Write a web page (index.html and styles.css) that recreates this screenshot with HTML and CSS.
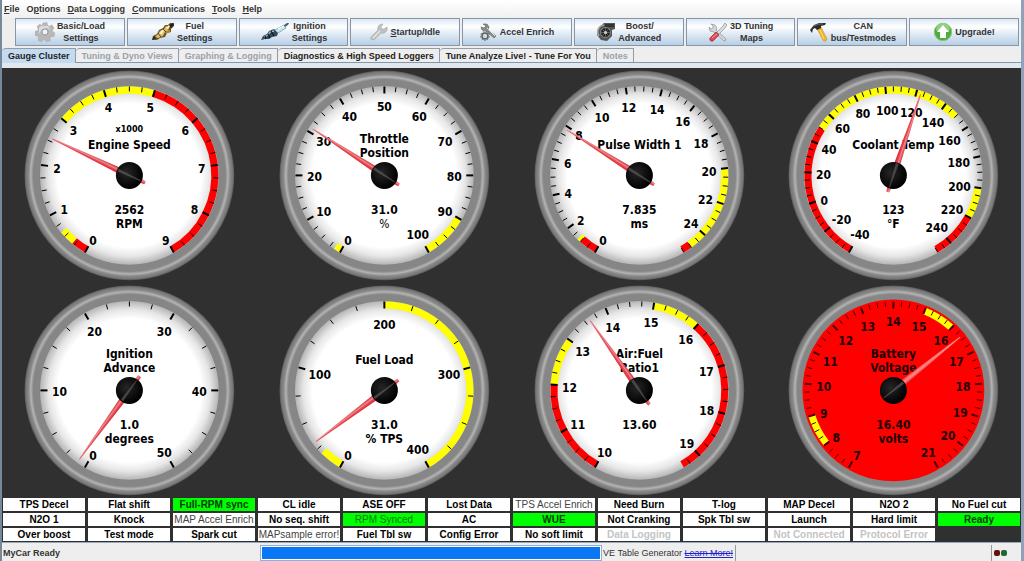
FILE: index.html
```html
<!DOCTYPE html>
<html lang="en">
<head>
<meta charset="utf-8">
<title>Gauge Cluster</title>
<link rel="stylesheet" href="styles.css">
</head>
<body>
<div class="app">
  <nav class="menu" aria-label="Main menu">
    <button type="button"><u>F</u>ile</button>
    <button type="button">O<u>p</u>tions</button>
    <button type="button"><u>D</u>ata Logging</button>
    <button type="button"><u>C</u>ommunications</button>
    <button type="button"><u>T</u>ools</button>
    <button type="button"><u>H</u>elp</button>
  </nav>

  <div class="toolbar" role="toolbar" aria-label="Settings">
    <button type="button" class="tool">
      <svg class="icon" viewBox="0 0 20 20" aria-hidden="true">
        <path d="M8 1l4-.4.7 2.8 1.700.8 2.500-1.300 2.300 3-1.800 2.100.4 1.900 2 1-.8 3.600-2.900 0-1.200 1.500.4 2.700-3.400 1.300-1.700-2.200-1.900 0-1.900 2-3.300-1.600.6-2.700-1.100-1.600-2.600-.5 0-3.800 2.600-.9.7-1.700-1.300-2.400L4.600 2.200l2.400 1.300z" fill="#b8b8b8" stroke="#a2a2a2" stroke-width=".5"/>
        <path d="M4 6l2-2 7 0 3 4-4-2-5 1-3 5z" fill="#dcdcdc"/>
        <circle cx="10" cy="10" r="3" fill="#eef2f6" stroke="#9a9a9a"/>
      </svg>
      <span>Basic/Load<br>Settings</span>
    </button>
    <button type="button" class="tool">
      <svg class="icon icon-fuel" viewBox="0 0 24 20" aria-hidden="true">
        <path d="M1 18l1-4 4-2 2-4 4-2 2-3 3 0 2-2 4 0 0 3-3 3 0 3-4 1-2 4-5 1-3 2z" fill="#6b5428"/>
        <path d="M4 15l3-3 2-3 4-2 2-3 3 1-1 4-3 1-2 4-5 2z" fill="#dfbd66"/>
        <path d="M8 12l3-4 2 0-2 4zM15 6l3-3 2 0-3 4z" fill="#fff3c4"/>
        <path d="M18 3l4-2 1 2-3 3zM1 18l2-4 2 2z" fill="#25201a"/>
        <path d="M14 9l5-1 0 2-4 2z" fill="#b58c34"/>
        <path d="M7 11l3 4M12 7l3 3" stroke="#4a3815" stroke-width=".9"/>
      </svg>
      <span>Fuel<br>Settings</span>
    </button>
    <button type="button" class="tool">
      <svg class="icon icon-plug" viewBox="0 0 30 20" aria-hidden="true">
        <path d="M1 18l2-4 4-2 2-3 5-2 4 4-1 3-5 1-3 2-4 0z" fill="#33495b"/>
        <path d="M4 15l4-2 2-3 4-1" fill="none" stroke="#a2b8c8" stroke-width="1.300"/>
        <path d="M11 9l3 5M8 12l2 4M5 14l1 3" stroke="#0e161e" stroke-width="1.200"/>
        <path d="M15 8l9-5 2 3-8 5z" fill="#c9e3ef" stroke="#6a94a8" stroke-width=".7"/>
        <path d="M18 7l6-3" stroke="#fff" stroke-width="1.200"/>
        <path d="M24 3l3-2 2 0-1 2-3 2z" fill="#4a6172"/>
      </svg>
      <span>Ignition<br>Settings</span>
    </button>
    <button type="button" class="tool">
      <svg class="icon icon-wrench" viewBox="0 0 18 18" aria-hidden="true">
        <path d="M1 14l7-7c-1-3 1-6 5-6l-2 3 1 2 2 0 3-2c1 4-2 7-6 6l-6 6c-3 2-5 0-4-2z" fill="#c0c0c0" stroke="#a4a4a4" stroke-width=".6"/>
        <path d="M3 15l7-7" stroke="#e8e8e8" stroke-width="1.200"/>
      </svg>
      <span><u>S</u>tartup/Idle</span>
    </button>
    <button type="button" class="tool">
      <svg class="icon icon-wrench" viewBox="0 0 18 18" aria-hidden="true">
        <path d="M3 1l4 0 2 3-1 3 8 6-2 2-8-7-4-1-1-3 3 1 2-2z" fill="#8b8e88" stroke="#5f625d" stroke-width=".6"/>
        <path d="M7 5l8 8" stroke="#e4e6e0"/>
        <circle cx="5" cy="13" r="3" fill="#d5d9dc" stroke="#5a6068" stroke-width="1.500"/>
        <circle cx="5" cy="13" r="4.400" fill="none" stroke="#5a6068" stroke-dasharray="1.500 1.500"/>
      </svg>
      <span>Accel Enrich</span>
    </button>
    <button type="button" class="tool">
      <svg class="icon" viewBox="0 0 20 20" aria-hidden="true">
        <path d="M8 1l11 0 0 6-3 1 0 6-5 5-6-1-4-5 1-7z" fill="#555"/>
        <path d="M9 2h9v3H9z" fill="#333"/>
        <path d="M3 14a7 7 0 0 1 5-11" fill="none" stroke="#aaa" stroke-width="1.500"/>
        <circle cx="9.500" cy="10.500" r="5" fill="#222" stroke="#8d8d8d"/>
        <path d="M9.500 6v9M5 10.500h9M6.500 7.500l6 6M12.500 7.500l-6 6" stroke="#777" stroke-width=".7"/>
        <circle cx="9.500" cy="10.500" r="1.600" fill="#ccc"/>
      </svg>
      <span>Boost/<br>Advanced</span>
    </button>
    <button type="button" class="tool">
      <svg class="icon" viewBox="0 0 20 20" aria-hidden="true">
        <path d="M3 2l4 1 2 3-1 2 9 8 1 2-2 1-10-9-4-1-1-4 2 2 2-1 0-2z" fill="#d6d6da" stroke="#8e8e96" stroke-width=".7"/>
        <path d="M17 1l2 2-2 3-6 6-2-2 6-6z" fill="#dcdce0" stroke="#8e8e96" stroke-width=".7"/>
        <path d="M8 10l3 3-6 6c-2 1-4-1-3-3z" fill="#dc4650" stroke="#a82730" stroke-width=".7"/>
        <path d="M4 16l5-4" stroke="#f6a2a6"/>
      </svg>
      <span>3D Tuning<br>Maps</span>
    </button>
    <button type="button" class="tool">
      <svg class="icon" viewBox="0 0 20 20" aria-hidden="true">
        <path d="M8 7l4-2 6 12c0 2-3 3-4 1z" fill="#f0b429" stroke="#c8921e" stroke-width=".6"/>
        <path d="M11 8l4 9" stroke="#ffdf80"/>
        <path d="M1 8l4-5 5-2 7 0-1 2-4 1 0 2-4 2-2-2-2 1-1 4z" fill="#2c2c2e"/>
        <path d="M5 4l5-2 4 0" fill="none" stroke="#7c7c80" stroke-width=".8"/>
      </svg>
      <span>CAN<br>bus/Testmodes</span>
    </button>
    <button type="button" class="tool">
      <svg class="icon" viewBox="0 0 20 20" aria-hidden="true">
        <circle cx="10" cy="10" r="8.700" fill="#4cae3c" stroke="#8dc486"/>
        <path d="M3 8a7 7 0 0 1 14 0c-4 3-10 3-14 0z" fill="#8ed07c"/>
        <path d="M10 3l6 7h-3v6H7v-6H4z" fill="#fff"/>
      </svg>
      <span>Upgrade!</span>
    </button>
  </div>

  <div class="tabs" role="tablist">
    <button type="button" class="tab selected" role="tab" aria-selected="true">Gauge Cluster</button>
    <button type="button" class="tab" role="tab" disabled>Tuning &amp; Dyno Views</button>
    <button type="button" class="tab" role="tab" disabled>Graphing &amp; Logging</button>
    <button type="button" class="tab" role="tab">Diagnostics &amp; High Speed Loggers</button>
    <button type="button" class="tab" role="tab">Tune Analyze Live! - Tune For You</button>
    <button type="button" class="tab" role="tab" disabled>Notes</button>
  </div>

  <main class="dash">
    <div class="gauges" id="gauges"></div>
    <div class="lamps">
      <div>TPS Decel</div><div>Flat shift</div><div class="on">Full-RPM sync</div><div>CL idle</div><div>ASE OFF</div><div>Lost Data</div><div class="thin">TPS Accel Enrich</div><div>Need Burn</div><div>T-log</div><div>MAP Decel</div><div>N2O 2</div><div>No Fuel cut</div>
      <div>N2O 1</div><div>Knock</div><div class="thin">MAP Accel Enrich</div><div>No seq. shift</div><div class="on thin">RPM Synced</div><div>AC</div><div class="on">WUE</div><div>Not Cranking</div><div>Spk Tbl sw</div><div>Launch</div><div>Hard limit</div><div class="on">Ready</div>
      <div>Over boost</div><div>Test mode</div><div>Spark cut</div><div class="thin">MAPsample error!</div><div>Fuel Tbl sw</div><div>Config Error</div><div>No soft limit</div><div class="off">Data Logging</div><div></div><div class="off">Not Connected</div><div class="off">Protocol Error</div>
    </div>
  </main>

  <footer class="status">
    <span class="ready">MyCar Ready</span>
    <span class="progress"><span class="fill"></span></span>
    <span class="promo">VE Table Generator <a href="#learn">Learn More!</a></span>
    <span class="blank"></span>
    <span class="leds"><i class="led red"></i><i class="led green"></i></span>
  </footer>
</div>
<script src="gauges.js"></script>
</body>
</html>
```
FILE: styles.css
```css
* { box-sizing: border-box; }

body {
  margin: 0;
  background: #eee;
  font: bold 9px/12px "Liberation Sans", Arial, sans-serif;
  color: #333;
}

button {
  margin: 0;
  padding: 0;
  border: 0;
  background: none;
  font: inherit;
  color: inherit;
}

.app {
  display: flex;
  flex-direction: column;
  min-height: 100vh;
  border-left: 2px solid #76889c;
  border-right: 3px solid #8fa2b8;
}

/* Menu */
.menu {
  display: flex;
  gap: 7px;
  height: 18px;
  padding: 0 2px;
  align-items: center;
  background: linear-gradient(#fff, #f0f0f0);
}

/* Toolbar */
.toolbar {
  display: grid;
  grid-template-columns: repeat(9, 1fr);
  gap: 2px;
  padding: 0 2px 2px 13px;
  background: #eee;
}

.tool {
  display: flex;
  align-items: center;
  justify-content: center;
  gap: 2px;
  height: 28px;
  border: 1px solid #8496a9;
  background: linear-gradient(#dde8f3, #fff 30%, #dde8f3 60%, #b8cfe5);
  white-space: nowrap;
}

.icon { flex: none; width: 20px; height: 20px; }
.icon-fuel { width: 24px; }
.icon-plug { width: 30px; }
.icon-wrench { width: 18px; height: 18px; }

/* Tabs */
.tabs {
  display: flex;
  height: 20px;
  padding-bottom: 5px;
  background: linear-gradient(#eee 14px, #8496a9 14px, #8496a9 15px, #dfe8ee 15px);
}

.tab {
  height: 14px;
  padding: 0 5px 0 6px;
  border: 1px solid #8f9caa;
  border-width: 1px 1px 0 0;
  border-top-left-radius: 4px;
  background: #eee;
  color: #222;
  white-space: nowrap;
}

.tab:disabled { color: #98a2ac; }

.tab.selected {
  height: 15px;
  background: #c3daf1;
}

/* Dashboard */
.dash {
  padding: 0 0 1px;
  background: #303030;
}

.gauges {
  display: grid;
  grid-template-columns: repeat(4, 1fr);
}

.gauge { display: block; width: 100%; }

.gauge text {
  font: bold 12px "DejaVu Sans Condensed", "DejaVu Sans", sans-serif;
  text-anchor: middle;
  fill: #000;
}

.gauge .scale { font-size: 9px; }
.gauge .light { font-weight: normal; }
.tick { stroke: #000; stroke-width: 1; }
.tick.major { stroke-width: 2; }
.band { fill: none; stroke-width: 7; }
.needle { fill: url(#needle); }
.alarm .needle { fill: url(#needle-alarm); }
.alarm .tick { stroke: #400; }
.alarm text { fill: #200; }

/* Lamps */
.lamps {
  display: grid;
  grid-template-columns: repeat(12, 1fr);
  gap: 2px 3px;
  padding: 0 1px;
}

.lamps div {
  height: 13px;
  background: #fff;
  color: #000;
  font-size: 10px;
  line-height: 13px;
  text-align: center;
  white-space: nowrap;
  overflow: hidden;
}

.lamps .on { background: #0f0; color: #063c06; }
.lamps .thin { font-weight: normal; color: #444; }
.lamps .on.thin { color: #087808; }
.lamps .off { color: #c4c4c4; }

/* Status bar */
.status {
  display: flex;
  flex: 1;
  align-items: stretch;
  height: 18px;
  padding-top: 2px;
  border-top: 1px solid #9aa8b8;
  background: #eee;
  line-height: 16px;
}

.ready { flex: 260; padding-left: 1px; }

.progress {
  flex: 341;
  padding: 1px;
  border: 1px solid #8fb0d8;
  background: #fff;
}

.fill { display: block; height: 100%; background: #0a78f5; }

.promo {
  flex: 133;
  padding-left: 1px;
  border-right: 1px solid #999;
  font-weight: normal;
  white-space: nowrap;
}

.promo a { color: #22c; text-decoration: underline line-through; }
.blank { flex: 258; border-right: 1px solid #999; }

.leds {
  display: flex;
  flex: 27;
  align-items: center;
  gap: 1px;
  padding-left: 2px;
}

.led { width: 6px; height: 6px; border-radius: 2px; }
.red { background: #6a1010; }
.green { background: #1c6a30; }
```
FILE: gauges.js
```js
const CX = 127.5, CY = 107.5, SWEEP = 300;
const R = '#f00', Y = '#ff0';

const gauges = [
  { title: ['Engine Speed'], scale: 'x1000', value: 2.562, text: '2562', unit: 'RPM', min: 0, max: 9, major: 1, minor: 0.25,
    bands: [[0, 0.3, R], [0.3, 0.6, Y], [3, 5, Y], [5, 9, R]] },
  { title: ['Throttle', 'Position'], value: 31, text: '31.0', unit: '%', light: true, min: 0, max: 100, major: 10, minor: 2.5,
    bands: [[0, 1.5, Y], [90, 100, Y]] },
  { title: ['Pulse Width 1'], value: 7.835, text: '7.835', unit: 'ms', min: 0, max: 25.5, major: 2, minor: 0.5,
    bands: [[0, 1, R], [1, 1.2, Y], [20, 25, Y], [25, 25.5, R]] },
  { title: ['Coolant Temp'], value: 123, text: '123', unit: '°F', min: -40, max: 250, major: 20, minor: 5,
    bands: [[-40, 50, R], [50, 150, Y], [200, 220, Y], [220, 250, R]] },
  { title: ['Ignition', 'Advance'], value: 1, text: '1.0', unit: 'degrees', min: 0, max: 50, major: 10, minor: 2.5, bands: [] },
  { title: ['Fuel Load'], value: 31, text: '31.0', unit: '% TPS', min: 0, max: 400, major: 100, minor: 25,
    bands: [[0, 20, Y], [200, 400, Y]] },
  { title: ['Air:Fuel', 'Ratio1'], value: 13.6, text: '13.60', unit: '', min: 10, max: 19.4, major: 1, minor: 0.25,
    bands: [[10, 12, R], [12, 13, Y], [15, 16, Y], [16, 19.4, R]] },
  { title: ['Battery', 'Voltage'], value: 16.4, text: '16.40', unit: 'volts', min: 7, max: 21, major: 1, minor: 0.25, alarm: true,
    bands: [[8, 9, Y], [15, 16, Y]] }
];

const defs = `<defs>
  <radialGradient id="ring" gradientUnits="userSpaceOnUse" cx="${CX}" cy="${CY}" r="105">
    <stop offset=".84" stop-color="#777"/><stop offset=".86" stop-color="#868686"/>
    <stop offset=".915" stop-color="#868686"/><stop offset=".94" stop-color="#b4b4b4"/>
    <stop offset=".96" stop-color="#8a8a8a"/><stop offset=".985" stop-color="#777"/>
    <stop offset="1" stop-color="#545454"/>
  </radialGradient>
  <radialGradient id="face" gradientUnits="userSpaceOnUse" cx="${CX}" cy="${CY}" r="90">
    <stop offset=".8" stop-color="#fff"/><stop offset=".9" stop-color="#e6e6e6"/>
    <stop offset="1" stop-color="#b2b2b2"/>
  </radialGradient>
  <radialGradient id="hub" cx=".4" cy=".4" r=".6">
    <stop offset="0" stop-color="#262626"/><stop offset="1" stop-color="#000"/>
  </radialGradient>
  <linearGradient id="needle"><stop offset="0" stop-color="#d81420"/><stop offset=".45" stop-color="#e8505a"/>
    <stop offset=".55" stop-color="#ef8a8e"/><stop offset="1" stop-color="#c81824"/></linearGradient>
  <linearGradient id="needle-alarm"><stop offset="0" stop-color="#f02c30"/><stop offset=".5" stop-color="#ff8c8c"/>
    <stop offset="1" stop-color="#e81c20"/></linearGradient>
</defs>`;

function polar(deg, r) {
  const a = deg * Math.PI / 180;
  return [(CX + r * Math.sin(a)).toFixed(2), (CY - r * Math.cos(a)).toFixed(2)];
}

function draw(g, i) {
  const angle = v => (v - g.min) / (g.max - g.min) * SWEEP - SWEEP / 2;
  let s = i ? '' : defs;
  s += `<circle cx="${CX}" cy="${CY}" r="105" fill="url(#ring)"/>`;
  s += `<circle cx="${CX}" cy="${CY}" r="${g.alarm ? 91 : 89.5}" fill="${g.alarm ? R : 'url(#face)'}"/>`;
  for (const [a, b, color] of g.bands) {
    const r = 85.5, large = angle(b) - angle(a) > 180 ? 1 : 0;
    s += `<path class="band" stroke="${color}" d="M${polar(angle(a), r)}A${r} ${r} 0 ${large} 1 ${polar(angle(b), r)}"/>`;
  }
  const per = Math.round(g.major / g.minor);
  const count = Math.floor((g.max - g.min) / g.minor + 0.001);
  for (let n = 0; n <= count; n++) {
    const v = g.min + n * g.minor, major = n % per === 0;
    const [x1, y1] = polar(angle(v), 89), [x2, y2] = polar(angle(v), major ? 82 : 84);
    s += `<line class="tick${major ? ' major' : ''}" x1="${x1}" y1="${y1}" x2="${x2}" y2="${y2}"/>`;
    if (major) {
      const label = String(v), [x, y] = polar(angle(v), 76 - 3 * label.length);
      s += `<text x="${x}" y="${(+y + 6).toFixed(2)}">${label}</text>`;
    }
  }
  if (g.scale) s += `<text class="scale" x="${CX}" y="64">${g.scale}</text>`;
  g.title.forEach((line, k) => {
    s += `<text x="${CX}" y="${(g.title.length > 1 ? 75 : 81) + 14 * k}">${line}</text>`;
  });
  s += `<text x="${CX}" y="146">${g.text}</text>`;
  s += `<text x="${CX}" y="160"${g.light ? ' class="light"' : ''}>${g.unit}</text>`;
  const turn = `rotate(${angle(g.value).toFixed(2)} ${CX} ${CY})`;
  const tail = g.alarm ? 'l-2 9h-3l-2-9z' : 'l-2 17h-3l-2-17z';
  s += `<path class="needle" transform="${turn}" d="M127 22h1l3 86${tail}"/>`;
  s += `<circle cx="${CX}" cy="${CY}" r="13.500" fill="url(#hub)"/>`;
  s += `<path transform="${turn}" d="M126 95h3l-1 25h-1z" fill="#666" opacity=".6"/>`;
  const name = g.title.join(' ');
  return `<svg class="gauge${g.alarm ? ' alarm' : ''}" viewBox="0 0 255 215" role="img" aria-label="${name}">${s}</svg>`;
}

document.getElementById('gauges').innerHTML = gauges.map(draw).join('');
```
